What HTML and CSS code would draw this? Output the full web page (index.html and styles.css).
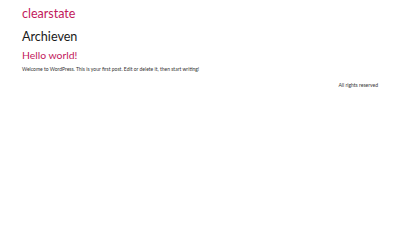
FILE: index.html
```html
<!DOCTYPE html>
<html>
<head>
<meta charset="utf-8">
<link rel="stylesheet" href="styles.css">
</head>
<body>
<div class="page">
  <header class="site-header">
    <a class="site-title" href="#">clearstate</a>
  </header>
  <main class="content">
    <h1 class="archive-title">Archieven</h1>
    <article class="post">
      <h2 class="post-title"><a href="#">Hello world!</a></h2>
      <p class="post-text">Welcome to WordPress. This is your first post. Edit or delete it, then start writing!</p>
    </article>
  </main>
  <footer class="site-footer">
    <span>All rights reserved</span>
  </footer>
</div>
</body>
</html>
```

FILE: styles.css
```css
html, body {
  margin: 0;
  padding: 0;
  background: #ffffff;
}
body {
  font-family: "Lato", "Open Sans", sans-serif;
  color: #222222;
}
.page {
  padding: 6px 22px 0 22px;
}
.site-title {
  display: block;
  font-size: 12.5px;
  line-height: 16px;
  color: #c2185b;
  text-decoration: none;
}
.content {
  margin-top: 7px;
}
.archive-title {
  margin: 0;
  font-size: 12.6px;
  font-weight: 400;
  line-height: 16px;
  color: #1a1a1a;
}
.post-title {
  margin: 3px 0 0 0;
  font-size: 10.4px;
  font-weight: 400;
  line-height: 14px;
}
.post-title a {
  color: #c2185b;
  text-decoration: none;
}
.post-text {
  margin: 3px 0 0 0;
  font-size: 5px;
  line-height: 8px;
  color: #333333;
}
.site-footer {
  display: flex;
  justify-content: flex-end;
  margin-top: 8px;
  font-size: 5px;
  line-height: 8px;
  color: #333333;
}
```
